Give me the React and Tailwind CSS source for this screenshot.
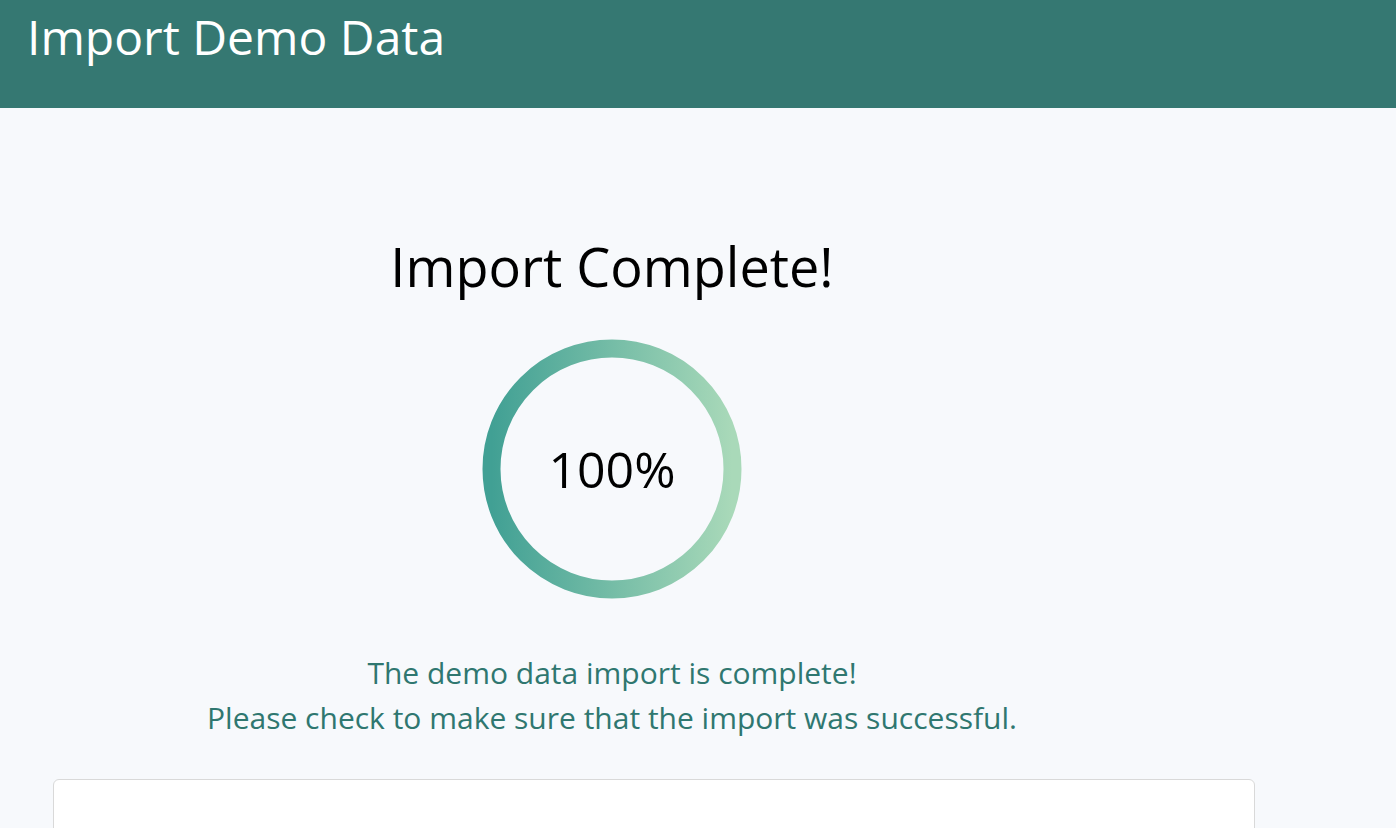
import React from 'react';

const ProgressRing = ({ percent }) => {
  return (
    <div className="relative w-[260px] h-[260px]">
      <svg width="260" height="260" viewBox="0 0 260 260">
        <defs>
          <linearGradient id="ringGrad" x1="0" y1="0" x2="1" y2="0">
            <stop offset="0%" stopColor="#41a094" />
            <stop offset="100%" stopColor="#a9d9b9" />
          </linearGradient>
        </defs>
        <circle cx="130" cy="130" r="120.5" fill="none" stroke="url(#ringGrad)" strokeWidth="18" />
      </svg>
      <div className="absolute inset-0 flex items-center justify-center text-[50px] leading-none text-black">
        {percent}%
      </div>
    </div>
  );
};

const App = () => {
  return (
    <div className="min-h-screen w-full bg-[#f7f9fc] font-['Open_Sans',sans-serif]">
      <header className="h-[108px] bg-[#357872] pl-[27px] pt-[8px]">
        <h1 className="text-[48px] leading-[1.2] text-white">Import Demo Data</h1>
      </header>

      <main className="w-[1224px] flex flex-col items-center pt-[123px]">
        <h2 className="text-[54px] leading-[70px] text-black">Import Complete!</h2>
        <div className="mt-[38px]">
          <ProgressRing percent={100} />
        </div>
        <div className="mt-[51px] text-center text-[30px] leading-[45px] text-[#2f7770]">
          <p>The demo data import is complete!</p>
          <p>Please check to make sure that the import was successful.</p>
        </div>
      </main>

      <div className="pl-[53px] pt-[39px]">
        <div className="w-[1202px] h-[120px] rounded-[6px] border border-[#d9d9d9] bg-white" />
      </div>
    </div>
  );
};

export default App;
